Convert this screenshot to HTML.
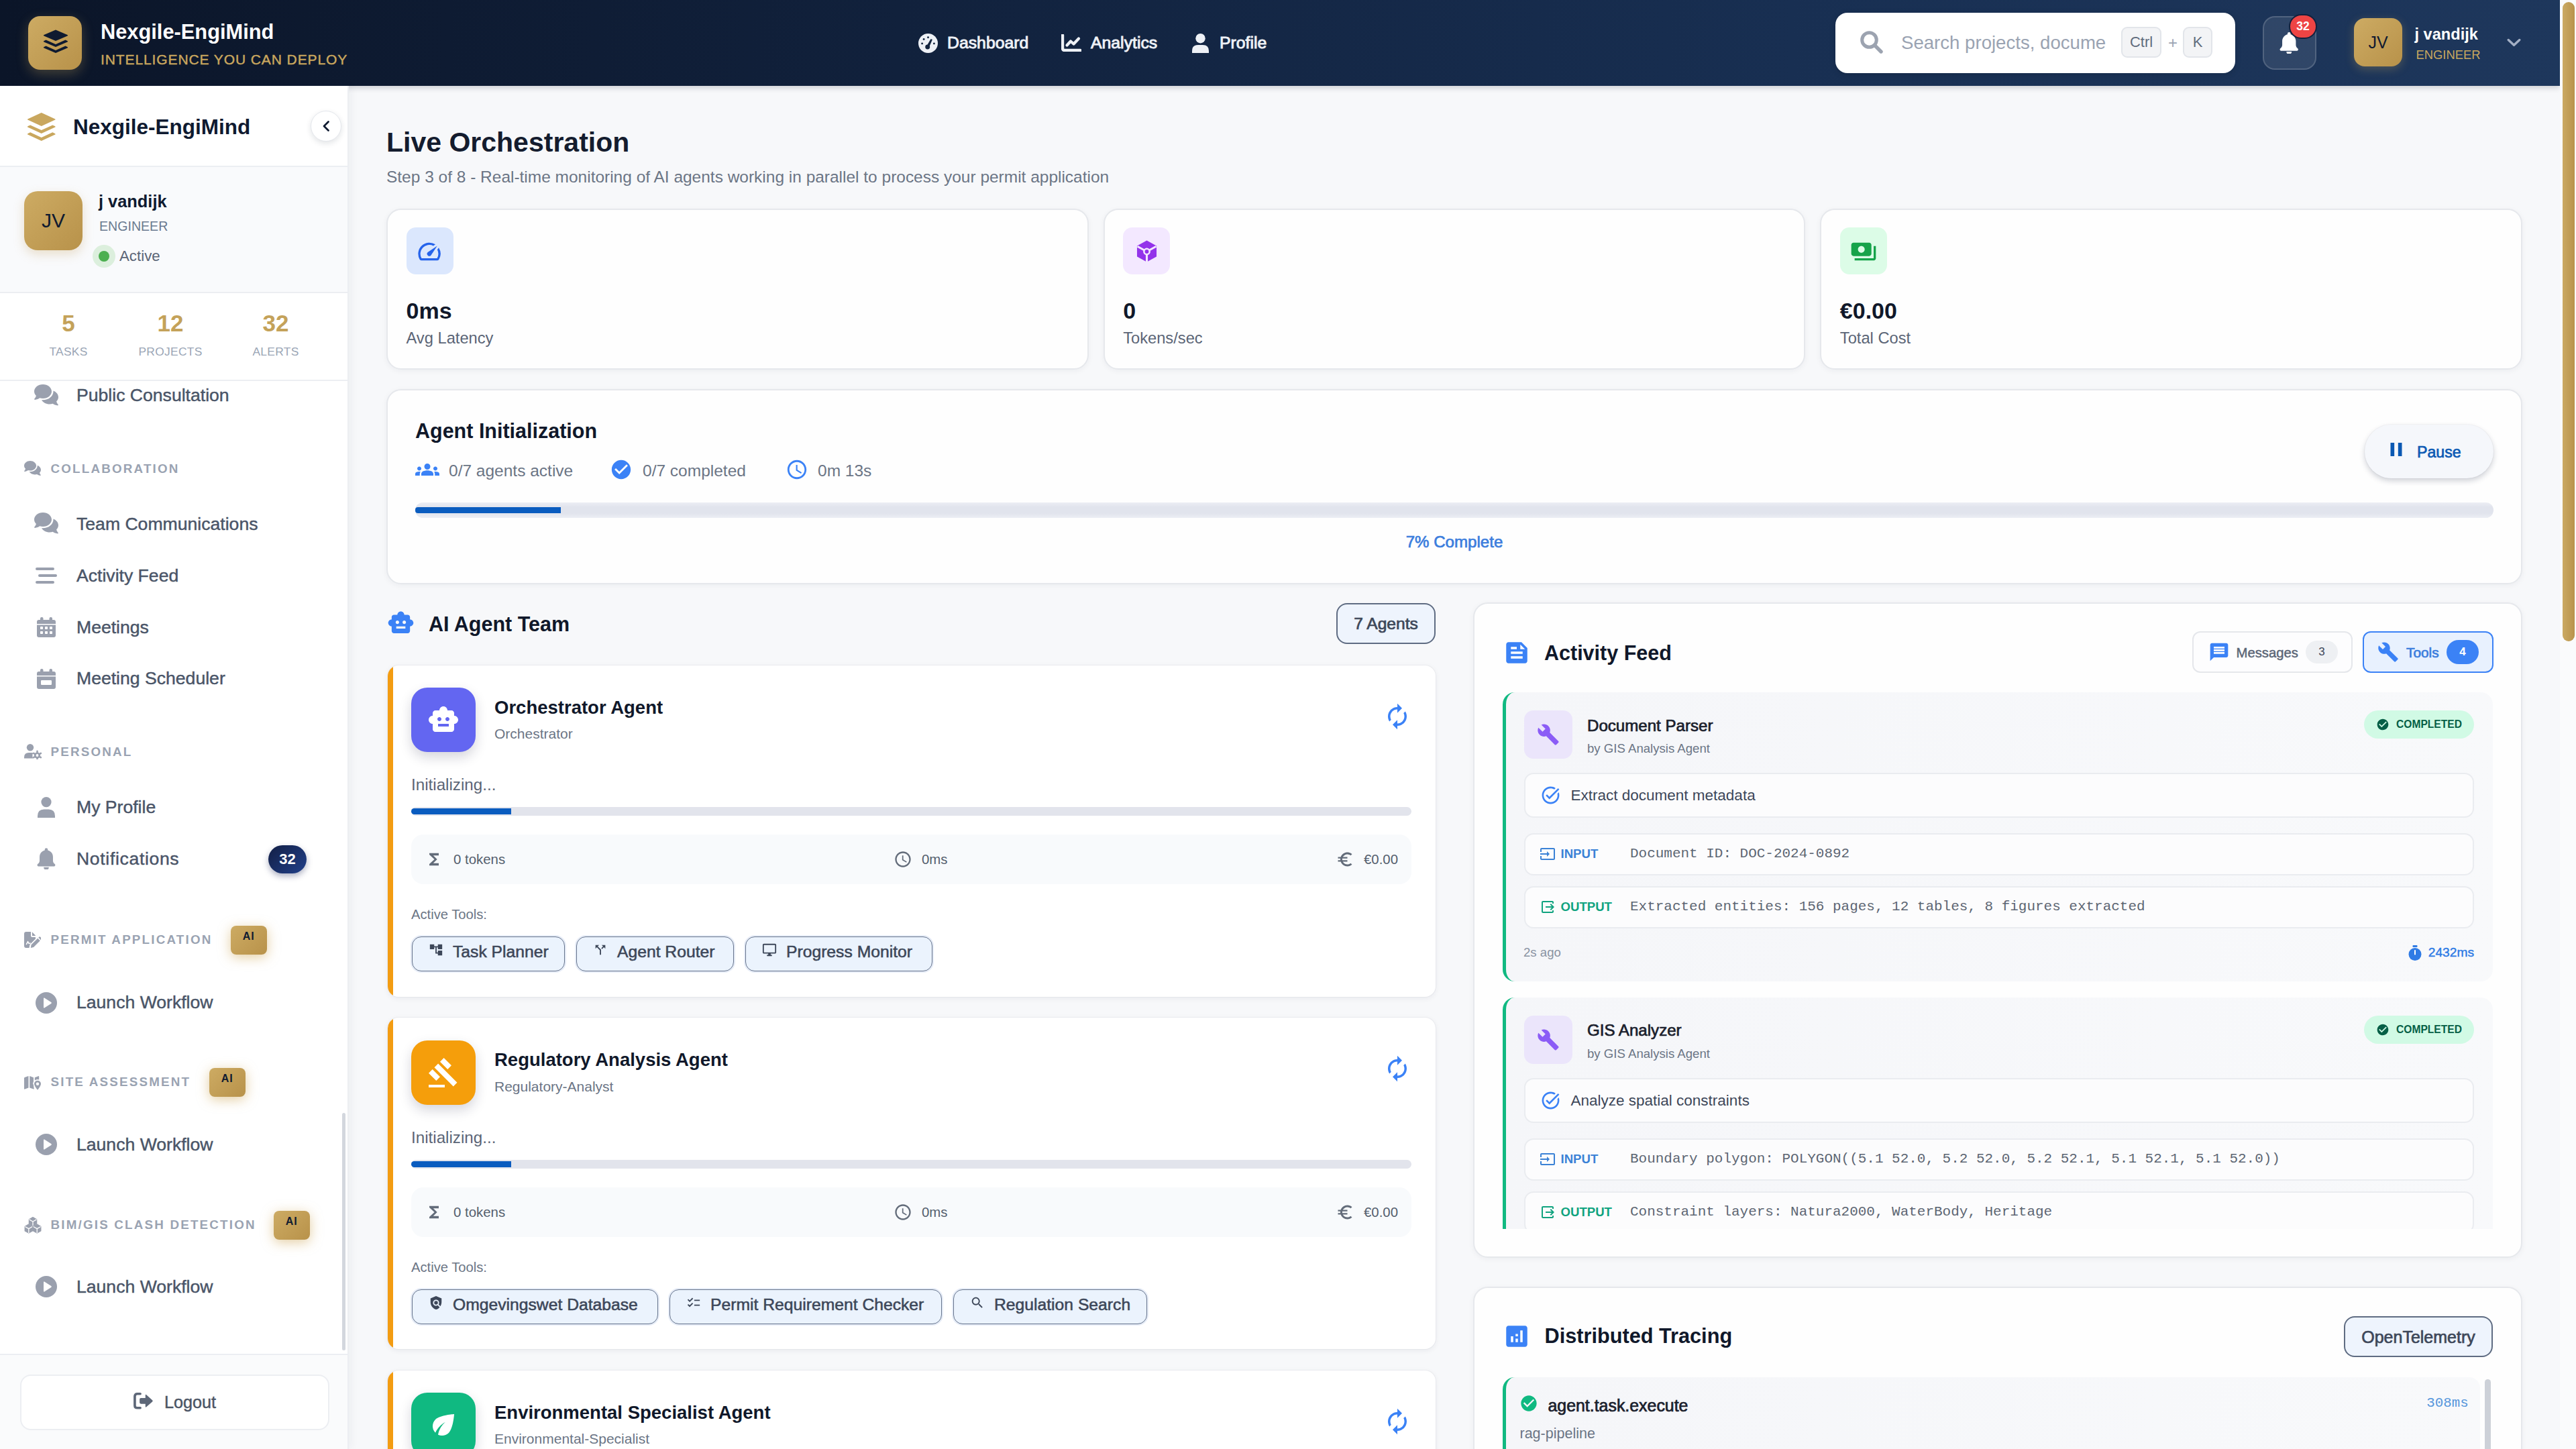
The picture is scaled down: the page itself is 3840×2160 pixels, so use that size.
<!DOCTYPE html>
<html lang="en">
<head>
<meta charset="utf-8">
<title>Nexgile-EngiMind - Live Orchestration</title>
<style>
*{box-sizing:border-box;margin:0;padding:0}
html,body{width:3840px;height:2160px;overflow:hidden;background:#f7f8fa;font-family:"Liberation Sans",sans-serif;color:#1a202c}
body{position:relative}
svg{display:block}
.abs{position:absolute}
.sb{-webkit-text-stroke:0.7px currentColor}
.sb5{-webkit-text-stroke:0.45px currentColor}
/* ---------- header ---------- */
#hdr{position:absolute;left:0;top:0;width:3816px;height:128px;background:linear-gradient(90deg,#0b1528 0%,#11213c 35%,#182f52 70%,#1e375c 100%);box-shadow:0 3px 8px rgba(10,20,40,.18);z-index:10}
#hdr .logo{position:absolute;left:42px;top:24px;width:80px;height:80px;border-radius:18px;background:linear-gradient(135deg,#cdab63,#b8924a);box-shadow:0 6px 18px rgba(200,165,90,.30)}
#hdr .brand{position:absolute;left:150px;top:28px;font-size:30.8px;font-weight:700;color:#fff;line-height:40px;white-space:nowrap}
#hdr .tag{position:absolute;left:150px;top:74px;font-size:21px;line-height:30px;color:#c9a75e;letter-spacing:.9px;white-space:nowrap}
.nav{position:absolute;top:44px;height:40px;display:flex;align-items:center;color:#eef1f6;font-size:24.8px;line-height:40px;white-space:nowrap;-webkit-text-stroke:.9px #eef1f6}
.srch{position:absolute;left:2736px;top:19px;width:595.5px;height:90px;border-radius:18px;background:#fff;box-shadow:0 2px 10px rgba(0,0,0,.15)}
.srch .ph{position:absolute;left:98px;top:25px;font-size:27.6px;line-height:40px;color:#9aa3b2;white-space:nowrap}
.kbd{position:absolute;top:21px;height:46px;border:2px solid #e2e5ea;border-radius:9px;background:#f3f4f6;color:#5f6b7c;font-size:22px;line-height:42px;text-align:center}
.bell{position:absolute;left:3373px;top:24px;width:80px;height:80px;border-radius:18px;background:rgba(255,255,255,.09);border:2px solid rgba(255,255,255,.16)}
.bell .bdg{position:absolute;left:37px;top:-5px;width:42px;height:37px;border-radius:19px;background:#ee4444;border:2.5px solid #13213d;color:#fff;font-size:17.5px;font-weight:700;line-height:32px;text-align:center}
.uav{position:absolute;left:3509px;top:27px;width:72px;height:72px;border-radius:16px;background:linear-gradient(135deg,#cdab63,#b8924a);color:#0f1a30;font-size:25px;line-height:72px;text-align:center;box-shadow:0 4px 14px rgba(200,165,90,.3)}
/* ---------- scrollbar ---------- */
#sbar{position:absolute;left:3816px;top:0;width:24px;height:2160px;background:#fafbfc;z-index:20}
#sbar i{position:absolute;left:3.5px;top:3px;width:18px;height:953px;border-radius:9px;background:linear-gradient(90deg,#cbaa62,#b8934c)}
/* ---------- sidebar ---------- */
#side{position:absolute;left:0;top:128px;width:520px;height:2032px;background:#fff;border-right:2px solid #eceef2;box-shadow:3px 0 12px rgba(20,30,50,.05);z-index:11}
#side .sh{position:absolute;left:0;top:0;width:518px;height:121px;border-bottom:2px solid #eceef2;background:#fff}
#side .sh .t{position:absolute;left:109px;top:38.8px;font-size:31.5px;font-weight:700;line-height:44px;color:#0f1a30;white-space:nowrap}
#side .cb{position:absolute;left:463px;top:37px;width:46px;height:46px;border-radius:23px;background:#fff;border:1px solid #e4e7ec;box-shadow:0 3px 8px rgba(20,30,50,.12)}
#side .us{position:absolute;left:0;top:121px;width:518px;height:188px;background:#f9fafc;border-bottom:2px solid #eceef2}
#side .av{position:absolute;left:36px;top:36px;width:87px;height:88px;border-radius:20px;background:linear-gradient(135deg,#cdab63,#b8924a);color:#0f1a30;font-size:30px;line-height:88px;text-align:center;box-shadow:0 6px 16px rgba(190,150,80,.28)}
#side .st{position:absolute;left:0;top:309px;width:518px;height:131px;border-bottom:2px solid #eceef2;background:#fff}
#side .st b{position:absolute;top:22.5px;width:120px;margin-left:-60px;text-align:center;font-size:35px;line-height:44px;color:#c4a25a}
#side .st span{position:absolute;top:73px;width:160px;margin-left:-80px;text-align:center;font-size:17.4px;line-height:28px;letter-spacing:.3px;color:#9aa5b5}
.ni{position:absolute;left:114px;font-size:26.6px;line-height:40px;color:#4a5568;white-space:nowrap}
.nic{position:absolute;left:50px}
.ns{position:absolute;left:75.5px;font-size:18.8px;font-weight:700;line-height:28px;letter-spacing:2.2px;color:#9aa3b2;white-space:nowrap}
.nsc{position:absolute;left:35px}
.ai{position:absolute;width:53.5px;height:43px;border-radius:8px;background:linear-gradient(135deg,#cdab63,#b8924a);color:#0f1a30;font-size:16px;font-weight:700;line-height:31px;text-align:center;letter-spacing:1px;box-shadow:0 4px 18px rgba(205,165,85,.55)}
#side .ft{position:absolute;left:0;top:1889.5px;width:518px;height:143px;border-top:2px solid #eceef2;background:#fafbfc}
#side .lo{position:absolute;left:29.5px;top:29px;width:461.5px;height:83.5px;border:2px solid #eceef2;border-radius:16px;background:#fff}
/* ---------- main ---------- */
#main{position:absolute;left:520px;top:128px;width:3296px;height:2032px;background:#f7f8fa;overflow:hidden}
.card{position:absolute;background:#fefefe;border:2px solid #e6e8ec;border-radius:22px;box-shadow:0 2px 8px rgba(20,30,50,.05)}
.h1{position:absolute;left:576px;top:186px;font-size:41px;font-weight:700;line-height:52px;color:#141c2e;white-space:nowrap}
.sub{position:absolute;left:576px;top:247px;font-size:24.47px;line-height:34px;color:#6b7585;white-space:nowrap}
.sic{position:absolute;left:27.5px;top:26.3px;width:70px;height:70px;border-radius:14px}
.sv{position:absolute;left:27.5px;top:128px;font-size:34px;font-weight:700;line-height:44px;color:#10182a;white-space:nowrap}
.sl{position:absolute;left:27.5px;top:174px;font-size:23.7px;line-height:34px;color:#5b6576;white-space:nowrap}
.h2{position:absolute;font-size:30.5px;font-weight:700;line-height:44px;color:#10182a;white-space:nowrap}
.mt{position:absolute;font-size:24.5px;line-height:34px;color:#6b7585;white-space:nowrap}
.pill{position:absolute;border:2px solid #5f6c82;border-radius:16px;background:#eef4fd;color:#3d4759;font-size:25px;text-align:center;white-space:nowrap}
/* agent card */
.ag{position:absolute;left:578px;width:1562px;height:494px;background:#fff;border-radius:16px;box-shadow:0 2px 8px rgba(20,30,50,.07),0 0 0 1px rgba(20,30,50,.035);overflow:hidden}
.ag:before{content:"";position:absolute;left:0;top:0;width:8px;height:100%;background:#f39c12}
.ag>*{margin-left:6px;margin-top:1px}
.ag1517>*{margin-top:1.6px}
.ag2042>*{margin-top:1.8px}
.ag .ib{position:absolute;left:29px;top:32px;width:96px;height:96px;border-radius:24px;box-shadow:0 8px 18px rgba(30,30,60,.18)}
.ag .ib svg{position:absolute;left:24px;top:24px}
.ag .nm{position:absolute;left:153px;top:41.5px;font-size:27.5px;font-weight:700;line-height:40px;color:#10182a;white-space:nowrap}
.ag .rl{position:absolute;left:153px;top:86px;font-size:21px;line-height:30px;color:#6b7585;white-space:nowrap}
.ag .rf{position:absolute;left:1478px;top:53.5px}
.ag .ini{position:absolute;left:29px;top:160px;font-size:24.2px;line-height:34px;color:#5b6576;white-space:nowrap}
.ag .pb{position:absolute;left:29px;top:210px;width:1491px;height:13px;border-radius:6.5px;background:#e2e4ec}
.ag .pb i{position:absolute;left:0;top:2px;width:149px;height:9px;background:#0a5cbf;border-radius:4.5px 0 0 4.5px}
.ag .sx{position:absolute;left:29px;top:251px;width:1491px;height:74px;border-radius:18px;background:#f8fafc}
.ag .sx span{position:absolute;top:22px;font-size:20.4px;line-height:30px;color:#555f6e;white-space:nowrap}
.ag .sx svg{position:absolute}
.ag .at{position:absolute;left:29px;top:355px;font-size:20.2px;line-height:30px;color:#6b7585;white-space:nowrap}
.chip{position:absolute;top:403px;height:52px;border:1.6px solid #66748c;border-radius:14px;background:#ebf3fd;box-shadow:0 0 0 2px rgba(205,218,240,.5)}
.chip span{position:absolute;left:60px;top:4px;font-size:24.7px;line-height:36px;color:#3d4759;white-space:nowrap;-webkit-text-stroke:.55px currentColor}
.chip svg{position:absolute;left:24px;top:8px}
/* feed */
.fi{position:absolute;left:2240px;width:1476px;background:linear-gradient(90deg,#f5f6f9,#f8f9fb);border-left:5px solid #10b981;border-radius:18px 18px 18px 18px}
.fi .ib{position:absolute;left:27px;top:27px;width:72px;height:72px;border-radius:14px;background:#ebe5fb}
.fi .tt{position:absolute;left:121px;top:31.5px;font-size:24.1px;line-height:36px;color:#1a202c;white-space:nowrap}
.fi .by{position:absolute;left:121px;top:70px;font-size:18.6px;line-height:28px;color:#6b7585;white-space:nowrap}
.fi .cp{position:absolute;left:1279px;top:27px;width:164px;height:42px;border-radius:21px;background:#d1fae5;color:#065f46;font-size:15.6px;font-weight:700;line-height:42px;white-space:nowrap}
.fi .bx{position:absolute;left:27px;width:1416px;border:2px solid #eaecf0;border-radius:14px;background:#fcfcfd}
.fi .bx .tx{position:absolute;left:67.5px;font-size:22.5px;line-height:34px;color:#3d4759;white-space:nowrap}
.fi .bx .lb{position:absolute;left:52.5px;top:14px;font-size:18.6px;font-weight:700;line-height:30px;white-space:nowrap}
.fi .bx .mo{position:absolute;left:156px;top:14px;font-family:"Liberation Mono",monospace;font-size:20.97px;line-height:30px;color:#5d6673;white-space:nowrap}
</style>
</head>
<body>
<!--HEADER-->
<div id="hdr">
  <div class="logo"><svg class="abs" style="left:21px;top:19px" width="40" height="40" viewBox="0 0 40 40"><g fill="#0f1a30"><path d="M20 1.5 L37.5 9 Q39 9.7 37.5 10.4 L20 18 L2.5 10.4 Q1 9.7 2.5 9 Z"/><path d="M5.5 16.6 L2.5 18 Q1 18.7 2.5 19.4 L20 27 L37.5 19.4 Q39 18.7 37.5 18 L34.5 16.6 L20 22.9 Z"/><path d="M5.5 25.6 L2.5 27 Q1 27.7 2.5 28.4 L20 36 L37.5 28.4 Q39 27.7 37.5 27 L34.5 25.6 L20 31.9 Z"/></g></svg></div>
  <div class="brand">Nexgile-EngiMind</div>
  <div class="tag sb5">INTELLIGENCE YOU CAN DEPLOY</div>
  <div class="nav" style="left:1368.5px"><svg width="29" height="29" viewBox="0 0 30 30" style="margin-right:14.5px"><circle cx="15" cy="15" r="15" fill="#eef1f6"/><g fill="#14253f"><circle cx="15" cy="6" r="1.500"/><circle cx="8.400" cy="8.800" r="1.500"/><circle cx="5.800" cy="15.400" r="1.500"/><circle cx="24.200" cy="15.400" r="1.500"/><circle cx="14.2" cy="20.6" r="3.6"/><path d="M13 19 L19.2 8.2 L21.6 9.4 L16.6 21 Z"/></g></svg>Dashboard</div>
  <div class="nav" style="left:1582px"><svg width="30" height="26" viewBox="0 0 30 26" style="margin-right:14px"><path d="M2 1.5 V21 Q2 24 5 24 H28.5" fill="none" stroke="#eef1f6" stroke-width="4.400" stroke-linecap="round"/><path d="M8.5 16.5 L14 10.5 L18.5 14.5 L26 6.5" fill="none" stroke="#eef1f6" stroke-width="4.200" stroke-linecap="round" stroke-linejoin="round"/></svg>Analytics</div>
  <div class="nav" style="left:1777px"><svg width="25" height="29" viewBox="0 0 25 29" style="margin-right:16px"><circle cx="12.5" cy="7.2" r="7.2" fill="#eef1f6"/><path d="M0 29 V26 Q0 17 9 17 H16 Q25 17 25 26 V29 Z" fill="#eef1f6"/></svg>Profile</div>
  <div class="srch">
    <svg class="abs" style="left:37px;top:27px" width="34" height="34" viewBox="0 0 34 34"><circle cx="13.5" cy="13.5" r="10.8" fill="none" stroke="#9ca3b0" stroke-width="5"/><path d="M21.5 21.5 L31 31" stroke="#9ca3b0" stroke-width="5.4" stroke-linecap="round"/></svg>
    <div class="ph">Search projects, docume</div>
    <div class="kbd" style="left:426px;width:60px">Ctrl</div>
    <div class="abs" style="left:496px;top:25px;font-size:24px;line-height:40px;color:#9aa3b2">+</div>
    <div class="kbd" style="left:518px;width:44px">K</div>
  </div>
  <div class="bell"><svg class="abs" style="left:23px;top:21.5px" width="28.5" height="32" viewBox="0 0 32 36" preserveAspectRatio="none"><path fill="#fff" d="M16 0 a2.6 2.6 0 0 1 2.6 2.6 v1 C24 5 27.4 9.6 27.4 15 v6.4 c0 2 .9 3.9 2.5 5.3 l.6.5 c.8.7 1 1.6.6 2.5 -.4.9-1.2 1.4-2.2 1.4 H3 c-1 0-1.8-.5-2.2-1.4 -.4-.9-.2-1.8.6-2.5 l.6-.5 C3.700 25.300 4.600 23.400 4.600 21.400 V15 C4.600 9.600 8 5 13.400 3.600 v-1 A2.600 2.600 0 0 1 16 0z M11.600 32.500 h8.800 a4.400 4.400 0 0 1-8.800 0z"/></svg><div class="bdg">32</div></div>
  <div class="uav">JV</div>
  <div class="abs" style="left:3599.5px;top:31.5px;font-size:23.6px;font-weight:700;line-height:38px;color:#fff;white-space:nowrap">j vandijk</div>
  <div class="abs" style="left:3601.5px;top:67.500px;font-size:18.4px;line-height:28px;color:#c9a75e;white-space:nowrap">ENGINEER</div>
  <svg class="abs" style="left:3735.5px;top:56px" width="23" height="15" viewBox="0 0 23 15"><path d="M3.200 3.500 L11.500 11.300 L19.800 3.500" fill="none" stroke="#a3afc4" stroke-width="3.400" stroke-linecap="round" stroke-linejoin="round"/></svg>
</div>
<!--/HEADER-->
<!--SIDEBAR-->
<div id="side">
 <div class="sh"><svg class="abs" style="left:39.5px;top:40px" width="43.5" height="42" viewBox="1 1 38 34.5" preserveAspectRatio="none"><g fill="#c9a75e"><path d="M20 1 L37.500 8.500 Q39 9.200 37.500 9.900 L20 17.500 L2.500 9.900 Q1 9.200 2.500 8.500 Z"/><path d="M5.500 16.100 L2.500 17.500 Q1 18.200 2.500 18.900 L20 26.500 L37.500 18.900 Q39 18.200 37.500 17.500 L34.500 16.100 L20 22.400 Z"/><path d="M5.500 25.100 L2.500 26.500 Q1 27.200 2.500 27.900 L20 35.500 L37.500 27.900 Q39 27.200 37.500 26.500 L34.500 25.100 L20 31.400 Z"/></g></svg><div class="t">Nexgile-EngiMind</div><div class="cb"><svg class="abs" style="left:15px;top:13px" width="14" height="18" viewBox="0 0 14 18"><path d="M10.500 2.500 L4 9 L10.500 15.500" fill="none" stroke="#0f1a30" stroke-width="2.800" stroke-linecap="round" stroke-linejoin="round"/></svg></div></div>
 <div class="us"><div class="av">JV</div>
  <div class="abs" style="left:147px;top:32px;font-size:25.4px;font-weight:700;line-height:38px;color:#0f1a30;white-space:nowrap">j vandijk</div>
  <div class="abs" style="left:148px;top:74px;font-size:19.6px;line-height:28px;color:#6b7a90;white-space:nowrap">ENGINEER</div>
  <div class="abs" style="left:138px;top:116px;width:34px;height:34px;border-radius:17px;background:#dcefdd"></div><div class="abs" style="left:147px;top:125px;width:16px;height:16px;border-radius:8px;background:#4caf50"></div>
  <div class="abs" style="left:178px;top:116px;font-size:22.3px;line-height:34px;color:#5b6576;white-space:nowrap">Active</div>
 </div>
 <div class="st"><b style="left:102px">5</b><b style="left:254px">12</b><b style="left:411px">32</b><span style="left:102px">TASKS</span><span style="left:254px">PROJECTS</span><span style="left:411px">ALERTS</span></div>
 <div class="nic" style="left:51.0px;top:444.6px"><svg width="36" height="34" viewBox="0 0 36 34"><g fill="#9aa0ae"><path d="M13 0 C20.2 0 26 4.7 26 10.5 C26 16.3 20.2 21 13 21 C11.3 21 9.7 20.7 8.2 20.3 C6.6 21.5 3.9 22.9 .9 22.9 C.2 22.9 -.2 22.1 .3 21.6 C.3 21.6 2.3 19.3 2.9 17 C1.1 15.2 0 13 0 10.5 C0 4.700 5.800 0 13 0z"/><path d="M28.4 9.6 C32.900 11.300 36 14.900 36 19 C36 21.500 34.900 23.700 33.100 25.500 C33.700 27.800 35.700 30.100 35.700 30.100 C36.200 30.600 35.800 31.400 35.100 31.400 C32.100 31.400 29.400 30 27.800 28.800 C26.300 29.300 24.700 29.500 23 29.500 C17.600 29.500 13 26.900 11 23.200 C11.700 23.300 12.300 23.300 13 23.300 C21.400 23.300 28.500 17.700 28.500 10.500 C28.500 10.200 28.500 9.900 28.400 9.600z"/></g></svg></div><div class="ni sb5" style="top:441.2px">Public Consultation</div>
 <div class="nsc" style="left:36.0px;top:558.9px"><svg width="25" height="23.6" viewBox="0 0 36 34"><g fill="#9aa0ae"><path d="M13 0 C20.2 0 26 4.7 26 10.5 C26 16.3 20.2 21 13 21 C11.3 21 9.7 20.7 8.2 20.3 C6.6 21.5 3.9 22.9 .9 22.9 C.2 22.9 -.2 22.1 .3 21.6 C.3 21.6 2.3 19.3 2.9 17 C1.1 15.2 0 13 0 10.5 C0 4.700 5.800 0 13 0z"/><path d="M28.4 9.6 C32.900 11.300 36 14.900 36 19 C36 21.500 34.900 23.700 33.100 25.500 C33.700 27.800 35.700 30.100 35.700 30.100 C36.200 30.600 35.800 31.400 35.100 31.400 C32.100 31.400 29.400 30 27.800 28.800 C26.300 29.300 24.700 29.500 23 29.500 C17.600 29.500 13 26.900 11 23.200 C11.700 23.300 12.300 23.300 13 23.300 C21.400 23.300 28.500 17.700 28.500 10.500 C28.500 10.200 28.500 9.900 28.400 9.600z"/></g></svg></div><div class="ns" style="top:556.5px">COLLABORATION</div>
 <div class="nic" style="left:51.0px;top:636.3px"><svg width="36" height="34" viewBox="0 0 36 34"><g fill="#9aa0ae"><path d="M13 0 C20.2 0 26 4.7 26 10.5 C26 16.3 20.2 21 13 21 C11.3 21 9.7 20.7 8.2 20.3 C6.6 21.5 3.9 22.9 .9 22.9 C.2 22.9 -.2 22.1 .3 21.6 C.3 21.6 2.3 19.3 2.9 17 C1.1 15.2 0 13 0 10.5 C0 4.700 5.800 0 13 0z"/><path d="M28.4 9.6 C32.900 11.300 36 14.900 36 19 C36 21.500 34.900 23.700 33.100 25.500 C33.700 27.800 35.700 30.100 35.700 30.100 C36.200 30.600 35.800 31.400 35.100 31.400 C32.100 31.400 29.400 30 27.800 28.800 C26.300 29.300 24.700 29.500 23 29.500 C17.600 29.500 13 26.900 11 23.200 C11.700 23.300 12.300 23.300 13 23.300 C21.400 23.300 28.500 17.700 28.500 10.500 C28.500 10.200 28.500 9.900 28.400 9.600z"/></g></svg></div><div class="ni sb5" style="top:633.0px">Team Communications</div>
 <div class="nic" style="left:53.0px;top:718.0px"><svg width="32" height="24" viewBox="0 0 32 24"><g fill="#9aa0ae"><rect x="0" y="0" width="28" height="4" rx="2"/><rect x="4" y="10" width="28" height="4" rx="2"/><rect x="0" y="20" width="28" height="4" rx="2"/></g></svg></div><div class="ni sb5" style="top:709.8px">Activity Feed</div>
 <div class="nic" style="left:55.0px;top:791.8px"><svg width="28" height="30" viewBox="0 0 28 30"><g fill="#9aa0ae"><rect x="5" y="0" width="4.5" height="8" rx="2"/><rect x="18.500" y="0" width="4.500" height="8" rx="2"/><path d="M0 7 Q0 4 3 4 H25 Q28 4 28 7 V10 H0z"/><path d="M0 11.500 H28 V27 Q28 30 25 30 H3 Q0 30 0 27z"/></g><rect x="5" y="14" width="4" height="4" rx=".8" fill="#fff"/><rect x="12" y="14" width="4" height="4" rx=".8" fill="#fff"/><rect x="19" y="14" width="4" height="4" rx=".8" fill="#fff"/><rect x="5" y="21" width="4" height="4" rx=".8" fill="#fff"/><rect x="12" y="21" width="4" height="4" rx=".8" fill="#fff"/><rect x="19" y="21" width="4" height="4" rx=".8" fill="#fff"/></svg></div><div class="ni sb5" style="top:786.5px">Meetings</div>
 <div class="nic" style="left:55.0px;top:868.5px"><svg width="28" height="30" viewBox="0 0 28 30"><g fill="#9aa0ae"><rect x="5" y="0" width="4.5" height="8" rx="2"/><rect x="18.500" y="0" width="4.500" height="8" rx="2"/><path d="M0 7 Q0 4 3 4 H25 Q28 4 28 7 V10 H0z"/><path d="M0 11.500 H28 V27 Q28 30 25 30 H3 Q0 30 0 27z"/></g><rect x="6" y="17" width="16" height="7" rx="1.200" fill="#fff"/></svg></div><div class="ni sb5" style="top:863.2px">Meeting Scheduler</div>
 <div class="nsc" style="left:35.5px;top:981.2px"><svg width="26" height="23" viewBox="0 0 26 23"><g fill="#9aa0ae"><circle cx="9" cy="5.200" r="5.200"/><path d="M0 21.500 V20 Q0 13 7 13 H11 Q12.500 13 13.500 13.500 Q11.500 16 12.500 19.500 L13.500 21.500z"/><circle cx="19.500" cy="17" r="4.600"/><g stroke="#9aa0ae" stroke-width="2.600" stroke-linecap="round"><path d="M19.500 10.800V23.200M14.100 13.900L24.900 20.100M14.100 20.100L24.900 13.900"/></g></g><circle cx="19.500" cy="17" r="1.900" fill="#fff"/></svg></div><div class="ns" style="top:978.5px">PERSONAL</div>
 <div class="nic" style="left:56.0px;top:1059.8px"><svg width="26" height="31" viewBox="0 0 26 31"><g fill="#9aa0ae"><circle cx="13" cy="7.600" r="7.600"/><path d="M0 31 V28.500 Q0 18.500 9.500 18.500 H16.500 Q26 18.500 26 28.500 V31z"/></g></svg></div><div class="ni sb5" style="top:1055.0px">My Profile</div>
 <div class="nic" style="left:55.0px;top:1136.0px"><svg width="28" height="32" viewBox="0 0 32 36"><path fill="#9aa0ae" d="M16 0 a2.600 2.600 0 0 1 2.600 2.600 v1 C24 5 27.400 9.600 27.400 15 v6.400 c0 2 .9 3.900 2.500 5.300 l.6.5 c.8.7 1 1.600.6 2.500 -.4.9-1.200 1.400-2.200 1.400 H3 c-1 0-1.800-.5-2.200-1.400 -.4-.9-.2-1.800.6-2.500 l.6-.5 C3.700 25.300 4.600 23.400 4.600 21.400 V15 C4.600 9.600 8 5 13.400 3.600 v-1 A2.600 2.600 0 0 1 16 0z M11.600 32.500 h8.800 a4.400 4.400 0 0 1-8.800 0z"/></svg></div><div class="ni sb5" style="top:1131.8px"><span style="letter-spacing:.65px">Notifications</span></div><div class="abs" style="left:400px;top:1131.500px;width:57px;height:42px;border-radius:21px;background:linear-gradient(135deg,#131f45,#21408a);box-shadow:0 4px 10px rgba(20,30,80,.35);color:#fff;font-size:22px;font-weight:700;line-height:42px;text-align:center">32</div>
 <div class="nsc" style="left:36.0px;top:1260.7px"><svg width="25" height="24" viewBox="0 0 25 24"><path fill="#9aa0ae" d="M0 3 Q0 0 3 0 H10 V6 Q10 8 12 8 H17 V10.500 L8.500 19 L7.500 24 H3 Q0 24 0 21z M11.800 .3 L16.700 5.200 Q17 5.600 17 6 H12z"/><path d="M3.500 18.500 L5.500 14.500 L7 17.500 L9 17" fill="none" stroke="#fff" stroke-width="1.600" stroke-linecap="round" stroke-linejoin="round"/><path fill="#9aa0ae" d="M20.200 9.700 L23.800 13.300 L14 23 L9.800 24 L10.600 19.300z M21.300 8.600 L22.200 7.700 Q23.200 6.800 24.100 7.700 L25.400 9 Q26.200 10 25.400 10.900 L24.800 12.200z"/></svg></div><div class="ns" style="top:1258.5px">PERMIT APPLICATION</div>
 <div class="ai" style="left:344px;top:1251.7px">AI</div>
 <div class="nic" style="left:53.0px;top:1350.5px"><svg width="32" height="32" viewBox="0 0 32 32"><circle cx="16" cy="16" r="16" fill="#9aa0ae"/><path d="M12 9.200 Q12 8 13.100 8.600 L23.300 15.100 Q24.400 16 23.300 16.900 L13.100 23.400 Q12 24 12 22.800z" fill="#fff"/></svg></div><div class="ni sb5" style="top:1346.2px">Launch Workflow</div>
 <div class="nsc" style="left:35.5px;top:1473.7px"><svg width="26" height="24" viewBox="0 0 26 24"><path fill="#9aa0ae" d="M0 5.200 Q0 4.400 .8 4.100 L6.500 2 V19.500 L1.200 21.600 Q0 22 0 20.800z M8.200 2 L14 4.200 V10 Q12.500 12.500 14 15.500 L14.800 21.800 L8.200 19.500z M15.800 4.200 L21 2.200 Q22.200 1.800 22.200 3 V7.500 Q19 6.500 15.800 8.500z"/><path fill="#9aa0ae" stroke="#fff" stroke-width="1.200" d="M20 8.200 A5.600 5.600 0 0 1 25.600 13.800 Q25.600 16.800 20.800 22.800 Q20 23.600 19.200 22.800 Q14.400 16.800 14.400 13.800 A5.600 5.600 0 0 1 20 8.200z"/><circle cx="20" cy="13.800" r="2.200" fill="#fff"/></svg></div><div class="ns" style="top:1471.0px">SITE ASSESSMENT</div>
 <div class="ai" style="left:312px;top:1464.2px">AI</div>
 <div class="nic" style="left:53.0px;top:1561.8px"><svg width="32" height="32" viewBox="0 0 32 32"><circle cx="16" cy="16" r="16" fill="#9aa0ae"/><path d="M12 9.200 Q12 8 13.100 8.600 L23.300 15.100 Q24.400 16 23.300 16.900 L13.100 23.400 Q12 24 12 22.800z" fill="#fff"/></svg></div><div class="ni sb5" style="top:1557.5px">Launch Workflow</div>
 <div class="nsc" style="left:35.5px;top:1685.7px"><svg width="26" height="25" viewBox="0 0 26 25"><polygon points="13.00,0.70 18.46,3.85 18.46,10.15 13.00,13.30 7.54,10.15 7.54,3.85" fill="#9aa0ae" stroke="#9aa0ae" stroke-width="1.600" stroke-linejoin="round"/><path d="M13 7 V13.3M13 7 L7.54 3.85M13 7 L18.46 3.85" stroke="#fff" stroke-width="1.300" fill="none"/><polygon points="6.80,11.30 12.26,14.45 12.26,20.75 6.80,23.90 1.34,20.75 1.34,14.45" fill="#9aa0ae" stroke="#9aa0ae" stroke-width="1.600" stroke-linejoin="round"/><path d="M6.8 17.6 V23.900000000000002M6.8 17.6 L1.34 14.45M6.8 17.6 L12.26 14.45" stroke="#fff" stroke-width="1.300" fill="none"/><polygon points="19.20,11.30 24.66,14.45 24.66,20.75 19.20,23.90 13.74,20.75 13.74,14.45" fill="#9aa0ae" stroke="#9aa0ae" stroke-width="1.600" stroke-linejoin="round"/><path d="M19.2 17.6 V23.900000000000002M19.2 17.6 L13.74 14.45M19.2 17.6 L24.66 14.45" stroke="#fff" stroke-width="1.300" fill="none"/></svg></div><div class="ns" style="top:1683.5px">BIM/GIS CLASH DETECTION</div>
 <div class="ai" style="left:408px;top:1676.7px">AI</div>
 <div class="nic" style="left:53.0px;top:1774.3px"><svg width="32" height="32" viewBox="0 0 32 32"><circle cx="16" cy="16" r="16" fill="#9aa0ae"/><path d="M12 9.200 Q12 8 13.100 8.600 L23.300 15.100 Q24.400 16 23.300 16.900 L13.100 23.400 Q12 24 12 22.800z" fill="#fff"/></svg></div><div class="ni sb5" style="top:1770.0px">Launch Workflow</div>
 <div class="abs" style="left:510px;top:1531px;width:5px;height:354px;border-radius:3px;background:#d3d7de"></div>
 <div class="ft"><div class="lo"><div class="abs" style="left:167.5px;top:25.5px"><svg width="28.8" height="24.6" viewBox="0 0 30 27" preserveAspectRatio="none"><path d="M10.500 2 H6 Q2 2 2 6 V21 Q2 25 6 25 H10.500" fill="none" stroke="#5d6778" stroke-width="3.800" stroke-linecap="round"/><path fill="#5d6778" d="M18.500 4.300 Q18.500 2.300 20 3.600 L29.300 12.300 Q30.400 13.500 29.300 14.700 L20 23.400 Q18.500 24.700 18.500 22.700 V18.300 H11.500 Q9.500 18.300 9.500 16.300 V10.700 Q9.500 8.700 11.500 8.700 H18.500z"/></svg></div><div class="abs sb5" style="left:213.5px;top:19.5px;font-size:25.2px;line-height:40px;color:#4b5565;white-space:nowrap">Logout</div></div></div>
</div>
<!--/SIDEBAR-->
<!--MAIN-->
<div class="h1">Live Orchestration</div>
<div class="sub">Step 3 of 8 - Real-time monitoring of AI agents working in parallel to process your permit application</div>
<div class="card" style="left:576px;top:311px;width:1046.67px;height:240px"><div class="sic" style="background:#dbe7fd"><div class="abs" style="left:14.2px;top:16px"><svg width="40" height="40" viewBox="0 0 24 24" fill="#2563eb" ><path d="M20.380 8.570l-1.230 1.850a8 8 0 0 1-.22 7.580H5.070A8 8 0 0 1 15.580 6.850l1.850-1.230A10 10 0 0 0 3.350 19a2 2 0 0 0 1.720 1h13.850a2 2 0 0 0 1.740-1 10 10 0 0 0-.27-10.440zm-9.790 6.840a2 2 0 0 0 2.830 0l5.660-8.490-8.490 5.660a2 2 0 0 0 0 2.830z"/></svg></div></div><div class="sv">0ms</div><div class="sl">Avg Latency</div></div>
<div class="card" style="left:1644.67px;top:311px;width:1046.67px;height:240px"><div class="sic" style="background:#f3e8ff"><div class="abs" style="left:19.5px;top:18.5px"><svg width="31" height="33" viewBox="0 0 32 34"><path fill="#9333ea" d="M16 .5 L31 8.800 V25.200 L16 33.500 L1 25.200 V8.800z"/><g stroke="#f3e8ff" stroke-width="3.200" stroke-linecap="butt"><path d="M16 17.500 V34M16 17.500 L1.500 9.500M16 17.500 L30.500 9.500"/></g><circle cx="16" cy="17.500" r="5.600" fill="#f3e8ff"/><circle cx="16" cy="17.500" r="3" fill="#9333ea"/></svg></div></div><div class="sv">0</div><div class="sl">Tokens/sec</div></div>
<div class="card" style="left:2713.33px;top:311px;width:1046.67px;height:240px"><div class="sic" style="background:#dcfce7"><div class="abs" style="left:14.8px;top:15.4px"><svg width="40" height="40" viewBox="0 0 24 24" fill="#16a34a" ><path d="M19 14V6c0-1.100-.9-2-2-2H3c-1.100 0-2 .9-2 2v8c0 1.100.9 2 2 2h14c1.100 0 2-.9 2-2zm-9-1c-1.660 0-3-1.340-3-3s1.340-3 3-3 3 1.340 3 3-1.340 3-3 3zm13-6v11c0 1.100-.9 2-2 2H4v-2h17V7h2z"/></svg></div></div><div class="sv">€0.00</div><div class="sl">Total Cost</div></div>
<div class="card" style="left:576px;top:580px;width:3184px;height:290.5px">
 <div class="h2" style="left:41px;top:38px">Agent Initialization</div>
 <div class="abs" style="left:41px;top:100px"><svg width="36" height="36" viewBox="0 0 24 24" fill="#3b82f6" ><path d="M12 12.750c1.630 0 3.070.39 4.240.9 1.080.48 1.760 1.560 1.760 2.730V18H6v-1.610c0-1.180.68-2.260 1.760-2.730 1.170-.52 2.610-.91 4.240-.91zM4 13c1.100 0 2-.9 2-2s-.9-2-2-2-2 .9-2 2 .9 2 2 2zm1.130 1.100c-.37-.06-.74-.1-1.130-.1-.99 0-1.930.21-2.780.58C.48 14.900 0 15.620 0 16.430V18h4.500v-1.610c0-.83.23-1.610.63-2.290zM20 13c1.100 0 2-.9 2-2s-.9-2-2-2-2 .9-2 2 .9 2 2 2zm4 3.430c0-.81-.48-1.530-1.220-1.850-.85-.37-1.790-.58-2.780-.58-.39 0-.76.04-1.130.1.4.68.63 1.460.63 2.290V18H24v-1.570zM12 6c1.660 0 3 1.340 3 3s-1.340 3-3 3-3-1.340-3-3 1.340-3 3-3z"/></svg></div><div class="mt" style="left:91px;top:103px">0/7 agents active</div>
 <div class="abs" style="left:331px;top:100.5px"><svg width="34" height="34" viewBox="0 0 24 24" fill="#3b82f6" ><path d="M12 2C6.480 2 2 6.480 2 12s4.480 10 10 10 10-4.480 10-10S17.520 2 12 2zm-2 15l-5-5 1.410-1.410L10 14.170l7.590-7.590L19 8l-9 9z"/></svg></div><div class="mt" style="left:380px;top:103px">0/7 completed</div>
 <div class="abs" style="left:593px;top:100.5px"><svg width="34" height="34" viewBox="0 0 24 24" fill="#3b82f6" ><path d="M11.990 2C6.470 2 2 6.480 2 12s4.470 10 9.990 10C17.520 22 22 17.520 22 12S17.520 2 11.990 2zM12 20c-4.420 0-8-3.580-8-8s3.580-8 8-8 8 3.580 8 8-3.580 8-8 8zm.5-13H11v6l5.250 3.150.75-1.230-4.500-2.670z"/></svg></div><div class="mt" style="left:641px;top:103px">0m 13s</div>
 <div class="abs" style="left:41px;top:166.5px;width:3098px;height:23.5px;border-radius:12px;background:linear-gradient(180deg,#eceef4 0,#e1e4ed 30%,#e1e4ed 70%,#eceef4 100%)"><div class="abs" style="left:0;top:7.5px;width:217px;height:8.5px;border-radius:4px 0 0 4px;background:#0a5cbf"></div></div>
 <div class="abs sb" style="left:0;top:208px;width:3180px;text-align:center;font-size:24.1px;line-height:36px;color:#3b7ddd">7% Complete</div>
 <div class="abs" style="left:2947px;top:51px;width:192px;height:80px;border-radius:40px;background:#f5f7fb;box-shadow:0 4px 8px rgba(20,30,60,.20),0 0 0 1px rgba(20,30,60,.03)"><div class="abs" style="left:30px;top:20px"><svg width="34" height="34" viewBox="0 0 24 24" fill="#0b59b3" ><path d="M6 19h4V5H6v14zm8-14v14h4V5h-4z"/></svg></div><div class="abs sb" style="left:78px;top:23px;font-size:23.2px;line-height:36px;color:#0b59b3">Pause</div></div>
</div>
<div class="abs" style="left:576.6px;top:908.3px;"><svg width="41" height="41" viewBox="0 0 24 24" fill="#3b82f6" ><path d="M20 9V7c0-1.100-.9-2-2-2h-3c0-1.660-1.340-3-3-3S9 3.340 9 5H6c-1.100 0-2 .9-2 2v2c-1.660 0-3 1.340-3 3s1.340 3 3 3v4c0 1.100.9 2 2 2h12c1.100 0 2-.9 2-2v-4c1.660 0 3-1.340 3-3s-1.340-3-3-3zM7.500 11.500c0-.83.67-1.500 1.500-1.500s1.500.67 1.500 1.500S9.830 13 9 13s-1.500-.67-1.500-1.500zM16 17H8v-2h8v2zm-1-4c-.83 0-1.500-.67-1.500-1.500S14.170 10 15 10s1.500.67 1.500 1.500S15.830 13 15 13z"/></svg></div>
<div class="h2" style="left:639px;top:908px">AI Agent Team</div>
<div class="pill sb" style="left:1992px;top:899px;width:148px;height:61px;line-height:58px;font-size:24.6px">7 Agents</div>
<div class="ag ag992" style="top:992px">
 <div class="ib" style="background:#6366f1"><svg width="48" height="48" viewBox="0 0 24 24" fill="#fff" ><path d="M20 9V7c0-1.100-.9-2-2-2h-3c0-1.660-1.340-3-3-3S9 3.340 9 5H6c-1.100 0-2 .9-2 2v2c-1.660 0-3 1.340-3 3s1.340 3 3 3v4c0 1.100.9 2 2 2h12c1.100 0 2-.9 2-2v-4c1.660 0 3-1.340 3-3s-1.340-3-3-3zM7.500 11.500c0-.83.67-1.500 1.500-1.500s1.500.67 1.500 1.500S9.830 13 9 13s-1.500-.67-1.500-1.500zM16 17H8v-2h8v2zm-1-4c-.83 0-1.500-.67-1.500-1.500S14.170 10 15 10s1.500.67 1.500 1.500S15.830 13 15 13z"/></svg></div>
 <div class="nm">Orchestrator Agent</div><div class="rl">Orchestrator</div>
 <div class="rf"><svg width="42" height="42" viewBox="0 0 24 24" fill="#3b82f6" ><path d="M12 6v3l4-4-4-4v3c-4.42 0-8 3.58-8 8 0 1.57.46 3.03 1.24 4.26L6.7 14.8c-.45-.83-.7-1.79-.7-2.8 0-3.31 2.69-6 6-6zm6.76 1.74L17.3 9.2c.44.84.7 1.79.7 2.8 0 3.31-2.69 6-6 6v-3l-4 4 4 4v-3c4.42 0 8-3.58 8-8 0-1.57-.46-3.03-1.24-4.26z"/></svg></div>
 <div class="ini">Initializing...</div><div class="pb"><i></i></div>
 <div class="sx"><svg width="28" height="28" viewBox="0 0 24 24" fill="#636c7a" style="left:20px;top:23px"><path d="M18 4H6v2l6.500 6L6 18v2h12v-3h-7l5-5-5-5h7z"/></svg><span style="left:63px">0 tokens</span><svg width="28" height="28" viewBox="0 0 24 24" fill="#636c7a" style="left:719px;top:23px"><path d="M11.990 2C6.470 2 2 6.480 2 12s4.470 10 9.990 10C17.520 22 22 17.520 22 12S17.520 2 11.990 2zM12 20c-4.420 0-8-3.580-8-8s3.580-8 8-8 8 3.580 8 8-3.580 8-8 8zm.5-13H11v6l5.250 3.150.75-1.230-4.500-2.670z"/></svg><span style="left:761px">0ms</span><svg width="28" height="28" viewBox="0 0 24 24" fill="#636c7a" style="left:1378px;top:23px"><path d="M15 18.500c-2.510 0-4.680-1.420-5.760-3.500H15v-2H8.580c-.05-.33-.08-.66-.08-1s.03-.67.08-1H15V9H9.240C10.320 6.920 12.500 5.500 15 5.500c1.610 0 3.090.59 4.230 1.570L21 5.300C19.410 3.870 17.300 3 15 3c-3.920 0-7.240 2.510-8.480 6H3v2h3.060c-.04.33-.06.66-.06 1 0 .34.02.67.06 1H3v2h3.520c1.240 3.490 4.560 6 8.480 6 2.310 0 4.410-.87 6-2.300l-1.780-1.770c-1.130.98-2.600 1.570-4.220 1.570z"/></svg><span style="left:1420px">€0.00</span></div>
 <div class="at">Active Tools:</div>
 <div class="chip" style="left:30px;width:228px"><svg width="22" height="22" viewBox="0 0 24 24" fill="#3d4759" ><path d="M22 11V3h-7v3H9V3H2v8h7V8h2v10h4v3h7v-8h-7v3h-2V8h2v3z"/></svg><span class="sb5">Task Planner</span></div>
 <div class="chip" style="left:275px;width:235px"><svg width="22" height="22" viewBox="0 0 24 24" fill="#3d4759" ><path d="M14 4l2.290 2.290-2.880 2.880 1.420 1.420 2.880-2.880L20 10V4zm-4 0H4v6l2.290-2.290 4.710 4.700V20h2v-8.410l-5.290-5.300z"/></svg><span class="sb5">Agent Router</span></div>
 <div class="chip" style="left:527px;width:279px"><svg width="22" height="22" viewBox="0 0 24 24" fill="#3d4759" ><path d="M21 2H3c-1.100 0-2 .9-2 2v12c0 1.100.9 2 2 2h7v2H8v2h8v-2h-2v-2h7c1.100 0 2-.9 2-2V4c0-1.100-.9-2-2-2zm0 14H3V4h18v12z"/></svg><span class="sb5">Progress Monitor</span></div>
</div>
<div class="ag ag1517" style="top:1517px">
 <div class="ib" style="background:#f59e0b"><svg width="48" height="48" viewBox="0 0 24 24" fill="#fff" ><path d="M1 21h12v2H1zM5.245 8.070l2.830-2.827 14.140 14.142-2.828 2.828zM12.317 1l5.657 5.656-2.830 2.830-5.654-5.660zM3.825 9.485l5.657 5.657-2.828 2.828-5.657-5.657z"/></svg></div>
 <div class="nm">Regulatory Analysis Agent</div><div class="rl">Regulatory-Analyst</div>
 <div class="rf"><svg width="42" height="42" viewBox="0 0 24 24" fill="#3b82f6" ><path d="M12 6v3l4-4-4-4v3c-4.42 0-8 3.58-8 8 0 1.57.46 3.03 1.24 4.26L6.7 14.8c-.45-.83-.7-1.79-.7-2.8 0-3.31 2.69-6 6-6zm6.76 1.74L17.3 9.2c.44.84.7 1.79.7 2.8 0 3.31-2.69 6-6 6v-3l-4 4 4 4v-3c4.42 0 8-3.58 8-8 0-1.57-.46-3.03-1.24-4.26z"/></svg></div>
 <div class="ini">Initializing...</div><div class="pb"><i></i></div>
 <div class="sx"><svg width="28" height="28" viewBox="0 0 24 24" fill="#636c7a" style="left:20px;top:23px"><path d="M18 4H6v2l6.500 6L6 18v2h12v-3h-7l5-5-5-5h7z"/></svg><span style="left:63px">0 tokens</span><svg width="28" height="28" viewBox="0 0 24 24" fill="#636c7a" style="left:719px;top:23px"><path d="M11.990 2C6.470 2 2 6.480 2 12s4.470 10 9.990 10C17.520 22 22 17.520 22 12S17.520 2 11.990 2zM12 20c-4.420 0-8-3.580-8-8s3.580-8 8-8 8 3.580 8 8-3.580 8-8 8zm.5-13H11v6l5.250 3.150.75-1.230-4.500-2.670z"/></svg><span style="left:761px">0ms</span><svg width="28" height="28" viewBox="0 0 24 24" fill="#636c7a" style="left:1378px;top:23px"><path d="M15 18.500c-2.510 0-4.680-1.420-5.760-3.500H15v-2H8.580c-.05-.33-.08-.66-.08-1s.03-.67.08-1H15V9H9.240C10.320 6.920 12.500 5.500 15 5.500c1.610 0 3.090.59 4.230 1.570L21 5.300C19.410 3.870 17.300 3 15 3c-3.920 0-7.240 2.510-8.480 6H3v2h3.060c-.04.33-.06.66-.06 1 0 .34.02.67.06 1H3v2h3.520c1.240 3.490 4.560 6 8.480 6 2.310 0 4.410-.87 6-2.300l-1.780-1.770c-1.130.98-2.600 1.570-4.220 1.570z"/></svg><span style="left:1420px">€0.00</span></div>
 <div class="at">Active Tools:</div>
 <div class="chip" style="left:30px;width:367px"><svg width="22" height="22" viewBox="0 0 24 24" fill="#3d4759" ><path d="M21 5l-9-4-9 4v6c0 5.550 3.840 10.740 9 12 2.300-.56 4.330-1.900 5.880-3.710l-3.120-3.120c-1.940 1.290-4.580 1.070-6.290-.64-1.950-1.950-1.950-5.120 0-7.070 1.950-1.950 5.120-1.950 7.070 0 1.710 1.710 1.920 4.350.64 6.290l2.900 2.900C20.290 15.690 21 13.380 21 11V5z M12 9a3 3 0 1 0 0 6 3 3 0 0 0 0-6z"/></svg><span class="sb5">Omgevingswet Database</span></div>
 <div class="chip" style="left:414px;width:406px"><svg width="22" height="22" viewBox="0 0 24 24" fill="#3d4759" ><path d="M22 7h-9v2h9V7zm0 8h-9v2h9v-2zM5.540 11L2 7.460l1.410-1.410 2.120 2.120 4.240-4.240 1.410 1.410L5.540 11zm0 8L2 15.460l1.410-1.410 2.120 2.120 4.240-4.240 1.410 1.410L5.540 19z"/></svg><span class="sb5">Permit Requirement Checker</span></div>
 <div class="chip" style="left:837px;width:289px"><svg width="22" height="22" viewBox="0 0 24 24" fill="#3d4759" ><path d="M15.500 14h-.79l-.28-.27C15.410 12.590 16 11.110 16 9.500 16 5.910 13.090 3 9.500 3S3 5.910 3 9.500 5.910 16 9.500 16c1.610 0 3.090-.59 4.230-1.570l.27.28v.79l5 4.990L20.490 19l-4.990-5zm-6 0C7.010 14 5 11.990 5 9.500S7.010 5 9.500 5 14 7.010 14 9.500 11.990 14 9.500 14z"/></svg><span class="sb5">Regulation Search</span></div>
</div>
<div class="ag ag2042" style="top:2042.5px">
 <div class="ib" style="background:#10b981"><svg width="48" height="48" viewBox="0 0 24 24" fill="#fff" ><path d="M6.050 8.050c-2.730 2.730-2.730 7.150-.02 9.880 1.470-3.400 4.090-6.240 7.360-7.930-2.770 2.340-4.710 5.610-5.390 9.320 2.600 1.230 5.800.78 7.950-1.370C19.430 14.470 20 4 20 4S9.530 4.570 6.050 8.050z"/></svg></div>
 <div class="nm">Environmental Specialist Agent</div><div class="rl">Environmental-Specialist</div>
 <div class="rf"><svg width="42" height="42" viewBox="0 0 24 24" fill="#3b82f6" ><path d="M12 6v3l4-4-4-4v3c-4.42 0-8 3.58-8 8 0 1.57.46 3.03 1.24 4.26L6.7 14.8c-.45-.83-.7-1.79-.7-2.8 0-3.31 2.69-6 6-6zm6.76 1.74L17.3 9.2c.44.84.7 1.79.7 2.8 0 3.31-2.69 6-6 6v-3l-4 4 4 4v-3c4.42 0 8-3.58 8-8 0-1.57-.46-3.03-1.24-4.26z"/></svg></div>
 <div class="ini">Initializing...</div><div class="pb"><i></i></div>
 <div class="sx"><svg width="28" height="28" viewBox="0 0 24 24" fill="#636c7a" style="left:20px;top:23px"><path d="M18 4H6v2l6.500 6L6 18v2h12v-3h-7l5-5-5-5h7z"/></svg><span style="left:63px">0 tokens</span><svg width="28" height="28" viewBox="0 0 24 24" fill="#636c7a" style="left:719px;top:23px"><path d="M11.990 2C6.470 2 2 6.480 2 12s4.470 10 9.990 10C17.520 22 22 17.520 22 12S17.520 2 11.990 2zM12 20c-4.420 0-8-3.580-8-8s3.580-8 8-8 8 3.580 8 8-3.580 8-8 8zm.5-13H11v6l5.250 3.150.75-1.230-4.500-2.670z"/></svg><span style="left:761px">0ms</span><svg width="28" height="28" viewBox="0 0 24 24" fill="#636c7a" style="left:1378px;top:23px"><path d="M15 18.500c-2.510 0-4.680-1.420-5.760-3.500H15v-2H8.580c-.05-.33-.08-.66-.08-1s.03-.67.08-1H15V9H9.240C10.320 6.920 12.500 5.500 15 5.500c1.610 0 3.090.59 4.230 1.570L21 5.300C19.410 3.870 17.300 3 15 3c-3.920 0-7.240 2.510-8.480 6H3v2h3.060c-.04.33-.06.66-.06 1 0 .34.02.67.06 1H3v2h3.520c1.240 3.490 4.560 6 8.480 6 2.310 0 4.410-.87 6-2.300l-1.780-1.770c-1.130.98-2.600 1.570-4.220 1.570z"/></svg><span style="left:1420px">€0.00</span></div>
 <div class="at">Active Tools:</div>
</div>
<div class="card" style="left:2196px;top:898px;width:1564px;height:977px"></div>
<div class="abs" style="left:2239.75px;top:951.75px;"><svg width="42" height="42" viewBox="0 0 24 24" fill="#3b82f6" ><path d="M16 3H5c-1.100 0-2 .9-2 2v14c0 1.100.9 2 2 2h14c1.100 0 2-.9 2-2V8l-5-5zM7 7h5v2H7V7zm10 10H7v-2h10v2zm0-4H7v-2h10v2zm-2-4V5l4 4h-4z"/></svg></div>
<div class="h2" style="left:2302px;top:951px">Activity Feed</div>
<div class="abs" style="left:3268px;top:941px;width:239px;height:62px;border:2px solid #e5e7eb;border-radius:12px;background:#fdfdfe"><div class="abs" style="left:22px;top:13px"><svg width="32" height="32" viewBox="0 0 24 24" fill="#3b82f6" ><path d="M20 2H4c-1.100 0-1.990.9-1.990 2L2 22l4-4h14c1.100 0 2-.9 2-2V4c0-1.100-.9-2-2-2zm-2 12H6v-2h12v2zm0-3H6V9h12v2zm0-3H6V6h12v2z"/></svg></div><div class="abs sb5" style="left:63.5px;top:11.5px;font-size:20.3px;line-height:36px;color:#5b6576;white-space:nowrap" >Messages</div><div class="abs" style="left:167px;top:12px;width:48px;height:34px;border-radius:17px;background:#eef0f3;color:#3d4759;font-size:17px;line-height:34px;text-align:center">3</div></div>
<div class="abs" style="left:3522px;top:941px;width:195px;height:62px;border:2px solid #3b82f6;border-radius:12px;background:#e8f1fe"><div class="abs" style="left:20px;top:13px"><svg width="32" height="32" viewBox="0 0 24 24" fill="#3b82f6" ><path d="M22.7 19l-9.1-9.1c.9-2.3.4-5-1.5-6.9-2-2-5-2.4-7.4-1.300L9 6 6 9 1.600 4.700C.4 7.100.9 10.100 2.900 12.100c1.900 1.900 4.600 2.400 6.900 1.500l9.100 9.100c.4.4 1 .4 1.400 0l2.300-2.300c.5-.4.5-1.100.1-1.400z"/></svg></div><div class="abs sb" style="left:63px;top:11.5px;font-size:20.8px;line-height:36px;color:#3b7ddd;white-space:nowrap">Tools</div><div class="abs" style="left:123px;top:11px;width:48px;height:36px;border-radius:18px;background:#3b82f6;color:#fff;font-size:17px;font-weight:700;line-height:36px;text-align:center">4</div></div>
<div class="fi" style="top:1032px;height:431px;">
 <div class="ib"><div class="abs" style="left:19px;top:19px"><svg width="34" height="34" viewBox="0 0 24 24" fill="#8b5cf6" ><path d="M22.7 19l-9.1-9.1c.9-2.3.4-5-1.5-6.9-2-2-5-2.4-7.4-1.300L9 6 6 9 1.600 4.700C.4 7.100.9 10.100 2.900 12.100c1.900 1.900 4.600 2.400 6.900 1.500l9.100 9.100c.4.4 1 .4 1.400 0l2.300-2.300c.5-.4.5-1.100.1-1.400z"/></svg></div></div>
 <div class="tt sb">Document Parser</div><div class="by">by GIS Analysis Agent</div>
 <div class="cp"><div class="abs" style="left:18px;top:11px"><svg width="20" height="20" viewBox="0 0 24 24" fill="#065f46" ><path d="M12 2C6.480 2 2 6.480 2 12s4.480 10 10 10 10-4.480 10-10S17.520 2 12 2zm-2 15l-5-5 1.410-1.410L10 14.170l7.590-7.590L19 8l-9 9z"/></svg></div><span class="abs" style="left:48px;top:0">COMPLETED</span></div>
 <div class="bx" style="top:120px;height:67px"><div class="abs" style="left:22px;top:16px"><svg width="31" height="31" viewBox="0 0 24 24" fill="#3b82f6" ><path d="M22 5.180L10.590 16.600l-4.240-4.240 1.410-1.410 2.830 2.830 10-10L22 5.180zm-2.210 5.040c.13.57.21 1.170.21 1.780 0 4.420-3.580 8-8 8s-8-3.580-8-8 3.580-8 8-8c1.580 0 3.040.46 4.280 1.250l1.440-1.440C16.100 2.670 14.130 2 12 2 6.480 2 2 6.480 2 12s4.480 10 10 10 10-4.480 10-10c0-1.190-.22-2.330-.6-3.390l-1.610 1.610z"/></svg></div><div class="tx" style="top:15px">Extract document metadata</div></div>
 <div class="bx" style="top:210px;height:63px"><div class="abs" style="left:21px;top:17px"><svg width="24" height="24" viewBox="0 0 24 24" fill="#3b82d6" ><path d="M21 3.010H3c-1.100 0-2 .9-2 2V9h2V4.990h18v14.030H3V15H1v4.010c0 1.100.9 1.980 2 1.980h18c1.100 0 2-.88 2-1.980v-14c0-1.110-.9-2-2-2zM11 16l4-4-4-4v3H1v2h10v3z"/></svg></div><div class="lb" style="color:#3b82d6">INPUT</div><div class="mo">Document ID: DOC-2024-0892</div></div>
 <div class="bx" style="top:289px;height:63px"><div class="abs" style="left:21px;top:17px"><svg width="24" height="24" viewBox="0 0 24 24" fill="#10a37f" ><path d="M17 17l5-5-5-5-1.410 1.410L18.170 11H9v2h9.170l-2.580 2.590z M19 19H5V5h14v2h2V5c0-1.100-.89-2-2-2H5c-1.100 0-2 .9-2 2v14c0 1.100.9 2 2 2h14c1.100 0 2-.89 2-2v-2h-2v2z"/></svg></div><div class="lb" style="color:#10a37f">OUTPUT</div><div class="mo">Extracted entities: 156 pages, 12 tables, 8 figures extracted</div></div>
 <div class="abs" style="left:26px;top:374px;font-size:18.6px;line-height:28px;color:#8a93a2">2s ago</div>
 <div class="abs" style="left:1345px;top:377px"><svg width="20" height="24" viewBox="0 0 20 24"><rect x="6.500" y="0" width="7" height="3" rx="1" fill="#2f7be5"/><circle cx="10" cy="13.500" r="9.500" fill="#2f7be5"/><rect x="9" y="7" width="2" height="7.500" rx="1" fill="#fff"/></svg></div><div class="abs sb5" style="right:28px;top:374px;font-size:19.2px;line-height:28px;color:#2f7be5">2432ms</div>
</div>
<div class="fi" style="top:1486.5px;height:345.5px;border-radius:18px 18px 0 0;overflow:hidden;">
 <div class="ib"><div class="abs" style="left:19px;top:19px"><svg width="34" height="34" viewBox="0 0 24 24" fill="#8b5cf6" ><path d="M22.7 19l-9.1-9.1c.9-2.3.4-5-1.5-6.9-2-2-5-2.4-7.4-1.300L9 6 6 9 1.600 4.700C.4 7.100.9 10.100 2.900 12.100c1.900 1.900 4.600 2.400 6.900 1.500l9.100 9.100c.4.4 1 .4 1.400 0l2.300-2.300c.5-.4.5-1.100.1-1.400z"/></svg></div></div>
 <div class="tt sb">GIS Analyzer</div><div class="by">by GIS Analysis Agent</div>
 <div class="cp"><div class="abs" style="left:18px;top:11px"><svg width="20" height="20" viewBox="0 0 24 24" fill="#065f46" ><path d="M12 2C6.480 2 2 6.480 2 12s4.480 10 10 10 10-4.480 10-10S17.520 2 12 2zm-2 15l-5-5 1.410-1.410L10 14.170l7.590-7.590L19 8l-9 9z"/></svg></div><span class="abs" style="left:48px;top:0">COMPLETED</span></div>
 <div class="bx" style="top:120px;height:67px"><div class="abs" style="left:22px;top:16px"><svg width="31" height="31" viewBox="0 0 24 24" fill="#3b82f6" ><path d="M22 5.180L10.590 16.600l-4.240-4.240 1.410-1.410 2.830 2.830 10-10L22 5.180zm-2.210 5.040c.13.57.21 1.170.21 1.780 0 4.420-3.580 8-8 8s-8-3.580-8-8 3.580-8 8-8c1.580 0 3.040.46 4.280 1.250l1.440-1.440C16.100 2.670 14.130 2 12 2 6.480 2 2 6.480 2 12s4.480 10 10 10 10-4.480 10-10c0-1.190-.22-2.330-.6-3.390l-1.610 1.610z"/></svg></div><div class="tx" style="top:15px">Analyze spatial constraints</div></div>
 <div class="bx" style="top:210px;height:63px"><div class="abs" style="left:21px;top:17px"><svg width="24" height="24" viewBox="0 0 24 24" fill="#3b82d6" ><path d="M21 3.010H3c-1.100 0-2 .9-2 2V9h2V4.990h18v14.030H3V15H1v4.010c0 1.100.9 1.980 2 1.980h18c1.100 0 2-.88 2-1.980v-14c0-1.110-.9-2-2-2zM11 16l4-4-4-4v3H1v2h10v3z"/></svg></div><div class="lb" style="color:#3b82d6">INPUT</div><div class="mo">Boundary polygon: POLYGON((5.1 52.0, 5.2 52.0, 5.2 52.1, 5.1 52.1, 5.1 52.0))</div></div>
 <div class="bx" style="top:289px;height:63px"><div class="abs" style="left:21px;top:17px"><svg width="24" height="24" viewBox="0 0 24 24" fill="#10a37f" ><path d="M17 17l5-5-5-5-1.410 1.410L18.170 11H9v2h9.170l-2.580 2.590z M19 19H5V5h14v2h2V5c0-1.100-.89-2-2-2H5c-1.100 0-2 .9-2 2v14c0 1.100.9 2 2 2h14c1.100 0 2-.89 2-2v-2h-2v2z"/></svg></div><div class="lb" style="color:#10a37f">OUTPUT</div><div class="mo">Constraint layers: Natura2000, WaterBody, Heritage</div></div>
</div>
<div class="card" style="left:2196px;top:1918px;width:1564px;height:400px"></div>
<div class="abs" style="left:2239.75px;top:1971px;"><svg width="42" height="42" viewBox="0 0 24 24" fill="#3b82f6" ><path d="M19 3H5c-1.100 0-2 .9-2 2v14c0 1.100.9 2 2 2h14c1.100 0 2-.9 2-2V5c0-1.100-.9-2-2-2zM9 17H7v-5h2v5zm4 0h-2v-3h2v3zm0-5h-2v-2h2v2zm4 5h-2V7h2v10z"/></svg></div>
<div class="h2" style="left:2302.5px;top:1970px;font-size:30.7px">Distributed Tracing</div>
<div class="pill sb" style="left:3494px;top:1961.6px;width:222px;height:61px;line-height:58px;font-size:25px">OpenTelemetry</div>
<div class="abs" style="left:2240px;top:2053px;width:1457px;height:140px;border-left:5px solid #10b981;border-radius:18px 16px 0 0;background:linear-gradient(90deg,#f5f6f9,#f8f9fb);overflow:hidden">
 <div class="abs" style="left:20px;top:24.7px"><svg width="28" height="28" viewBox="0 0 24 24" fill="#10b981" ><path d="M12 2C6.480 2 2 6.480 2 12s4.480 10 10 10 10-4.480 10-10S17.520 2 12 2zm-2 15l-5-5 1.410-1.410L10 14.170l7.590-7.590L19 8l-9 9z"/></svg></div><div class="abs sb" style="left:62.500px;top:23.5px;font-size:24.9px;line-height:36px;color:#1a202c">agent.task.execute</div>
 <div class="abs" style="left:1372.3px;top:24px;font-family:'Liberation Mono',monospace;font-size:20.8px;line-height:30px;color:#5596dc">308ms</div>
 <div class="abs" style="left:20.500px;top:69.3px;font-size:21.5px;line-height:30px;color:#6b7585">rag-pipeline</div>
</div>
<div class="abs" style="left:3704px;top:2056px;width:9px;height:140px;border-radius:5px;background:#cdd1d8"></div>
<!--/MAIN-->
<!--SCROLL-->
<div id="sbar"><i></i></div>
<!--/SCROLL-->
</body>
</html>
